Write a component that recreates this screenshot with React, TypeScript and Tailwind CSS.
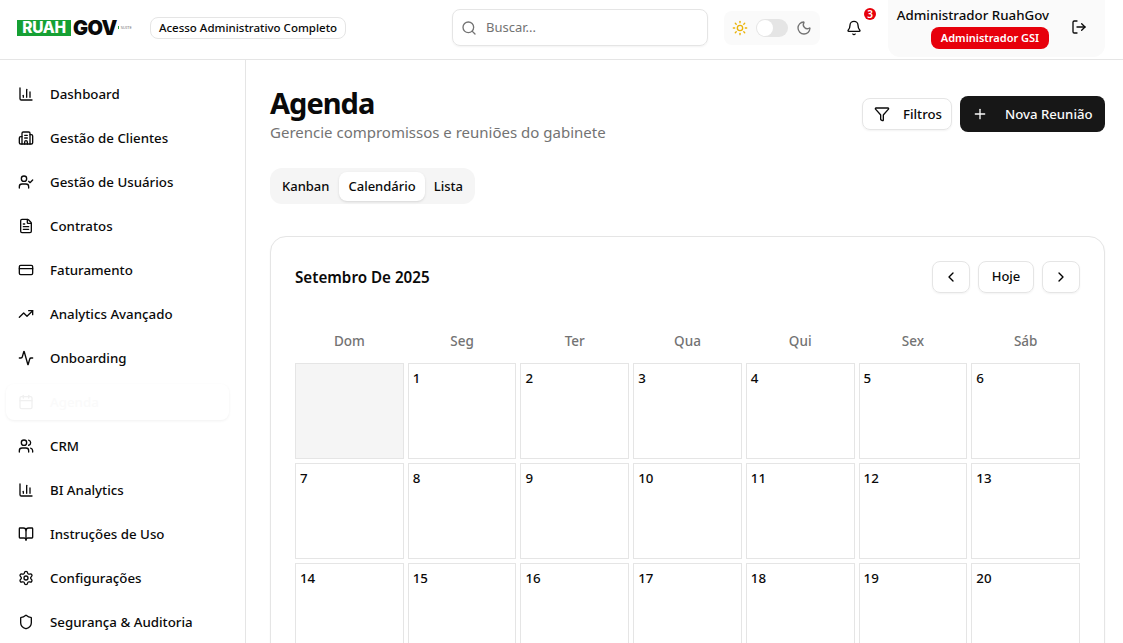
import {
  Activity,
  BookOpen,
  Building2,
  Calendar,
  ChartColumn,
  ChevronLeft,
  ChevronRight,
  CreditCard,
  FileText,
  Filter,
  Bell,
  LogOut,
  Moon,
  Plus,
  Search,
  Settings,
  Shield,
  Sun,
  TrendingUp,
  UserCheck,
  Users,
} from "lucide-react";

const navItems = [
  { name: "Dashboard", icon: ChartColumn },
  { name: "Gestão de Clientes", icon: Building2 },
  { name: "Gestão de Usuários", icon: UserCheck },
  { name: "Contratos", icon: FileText },
  { name: "Faturamento", icon: CreditCard },
  { name: "Analytics Avançado", icon: TrendingUp },
  { name: "Onboarding", icon: Activity },
  { name: "Agenda", icon: Calendar, active: true },
  { name: "CRM", icon: Users },
  { name: "BI Analytics", icon: ChartColumn },
  { name: "Instruções de Uso", icon: BookOpen },
  { name: "Configurações", icon: Settings },
  { name: "Segurança & Auditoria", icon: Shield },
];

const weekDays = ["Dom", "Seg", "Ter", "Qua", "Qui", "Sex", "Sáb"];

const days: (number | null)[] = [null];
for (let d = 1; d <= 20; d++) days.push(d);

function Logo() {
  return (
    <div className="flex items-center w-[133px] shrink-0">
      <div className="flex items-center justify-center w-[54px] h-[16px] bg-[#16a034] text-white text-[15.5px] leading-none font-extrabold font-['Inter',sans-serif] tracking-[-0.3px]">
        RUAH
      </div>
      <span className="ml-[2px] text-[#0a0a0a] text-[20px] leading-none font-black font-['Inter',sans-serif] tracking-[-0.6px]">
        GOV
      </span>
      <span className="ml-[1px] w-[1px] h-[3px] bg-[#16a034]" />
      <span className="ml-[2px] text-[4px] leading-none text-[#737373]">SUITE</span>
    </div>
  );
}

function Header() {
  return (
    <header className="flex items-center h-[60px] shrink-0 border-b border-[#e5e5e5] pl-[17px] pr-[18px] pb-[4px] bg-white">
      <Logo />
      <span className="flex items-center justify-center shrink-0 w-[196px] h-[22px] rounded-lg border border-[#e5e5e5] text-[11.5px] font-medium text-[#0a0a0a] whitespace-nowrap">
        Acesso Administrativo Completo
      </span>
      <div className="flex items-center gap-[9px] shrink-0 w-[256px] h-[37px] ml-[106px] px-2 rounded-lg border border-[#e5e5e5] shadow-xs">
        <Search size={16} className="text-[#737373]" />
        <span className="text-[13px] text-[#737373]">Buscar...</span>
      </div>
      <div className="flex items-center justify-center gap-[8px] shrink-0 w-[96px] h-[34px] ml-4 rounded-lg bg-[#fafafa]">
        <Sun size={16} className="text-[#eab308]" />
        <span className="flex items-center w-[32px] h-[18px] rounded-full bg-[#e5e5e5] p-px">
          <span className="w-4 h-4 rounded-full bg-white" />
        </span>
        <Moon size={16} className="text-[#737373]" />
      </div>
      <div className="relative flex items-center justify-center shrink-0 w-9 h-9 ml-4">
        <Bell size={16} className="text-[#0a0a0a]" />
        <span className="absolute top-[-2px] right-[-4px] flex items-center justify-center w-3 h-3 rounded-full bg-[#e7000b] text-white text-[10px] font-semibold leading-none">
          3
        </span>
      </div>
      <div className="flex items-start gap-[22px] shrink-0 self-start w-[217px] h-[57px] ml-4 pr-[18px] rounded-b-xl bg-[#fafafa]">
        <div className="flex flex-col items-end flex-1 gap-[2px] pt-[5px]">
          <span className="text-[13.3px] leading-[20px] font-medium text-[#0a0a0a] whitespace-nowrap">
            Administrador RuahGov
          </span>
          <span className="flex items-center justify-center w-[118px] h-[22px] rounded-lg bg-[#e7000b] text-white text-[11px] font-semibold whitespace-nowrap">
            Administrador GSI
          </span>
        </div>
        <LogOut size={16} className="mt-[19px] text-[#0a0a0a]" />
      </div>
    </header>
  );
}

function Sidebar() {
  return (
    <aside className="w-[246px] shrink-0 border-r border-[#e5e5e5] bg-white">
      <nav className="flex flex-col gap-2 pt-4 pl-[6px] pr-[16px]">
        {navItems.map(({ name, icon: Icon, active }) => (
          <a
            key={name}
            className={`flex items-center gap-4 h-9 px-3 rounded-lg text-[13.3px] font-medium whitespace-nowrap ${
              active ? "text-[#fafafa] bg-white shadow-[0_1px_3px_rgba(0,0,0,0.06)]" : "text-[#0a0a0a]"
            }`}
          >
            <Icon size={16} strokeWidth={2} className={active ? "text-[#f0f0f0]" : "text-[#0a0a0a]"} />
            <span className="pt-[2px]">{name}</span>
          </a>
        ))}
      </nav>
    </aside>
  );
}

function CalendarCard() {
  return (
    <section className="mt-8 rounded-2xl border border-[#e5e5e5] shadow-xs px-6 pt-6 pb-6 bg-white">
      <div className="flex items-center justify-between h-8">
        <h2 className="text-[15.2px] font-semibold text-[#0a0a0a]">Setembro De 2025</h2>
        <div className="flex items-center gap-2">
          <button className="flex items-center justify-center w-[38px] h-8 rounded-lg border border-[#e5e5e5] shadow-xs">
            <ChevronLeft size={16} />
          </button>
          <button className="flex items-center justify-center w-[56px] h-8 rounded-lg border border-[#e5e5e5] shadow-xs text-[13px] font-medium text-[#0a0a0a]">
            Hoje
          </button>
          <button className="flex items-center justify-center w-[38px] h-8 rounded-lg border border-[#e5e5e5] shadow-xs">
            <ChevronRight size={16} />
          </button>
        </div>
      </div>
      <div className="grid grid-cols-7 gap-1 mt-[38px]">
        {weekDays.map((d) => (
          <div key={d} className="h-[20px] mb-[8px] text-center text-[13.5px] leading-[20px] font-medium text-[#737373]">
            {d}
          </div>
        ))}
        {days.map((d, i) => (
          <div
            key={i}
            className={`h-24 border border-[#e5e5e5] p-1 text-[13.3px] leading-[20px] font-medium text-[#0a0a0a] ${
              d === null ? "bg-[#f5f5f5]" : "bg-white"
            }`}
          >
            {d}
          </div>
        ))}
      </div>
    </section>
  );
}

export default function App() {
  return (
    <div className="flex flex-col h-screen overflow-hidden bg-white font-['Noto_Sans',sans-serif]">
      <Header />
      <div className="flex flex-1 min-h-0">
        <Sidebar />
        <main className="flex-1 min-w-0 pt-[25px] pl-6 pr-[18px]">
          <div className="flex items-start justify-between">
            <div>
              <h1 className="text-[29px] leading-9 font-bold tracking-[-1px] text-[#0a0a0a]">Agenda</h1>
              <p className="-mt-[1px] text-[15px] leading-6 text-[#737373]">Gerencie compromissos e reuniões do gabinete</p>
            </div>
            <div className="flex items-center gap-2 mt-[11px]">
              <button className="flex items-center gap-[13px] w-[90px] h-8 pl-[11px] rounded-lg border border-[#e5e5e5] shadow-xs text-[13.2px] font-medium text-[#0a0a0a]">
                <Filter size={16} />
                <span className="pt-[2px]">Filtros</span>
              </button>
              <button className="flex items-center gap-[17px] w-[145px] h-9 pl-[12px] rounded-lg bg-[#171717] text-[13.2px] font-medium text-[#fafafa]">
                <Plus size={16} />
                <span className="pt-[2px]">Nova Reunião</span>
              </button>
            </div>
          </div>
          <div className="flex items-center gap-[1px] w-[205px] h-9 mt-6 px-[3px] rounded-xl bg-[#f5f5f5] text-[13px] font-medium text-[#0a0a0a]">
            <span className="h-[29px] leading-[29px] px-[9px]">Kanban</span>
            <span className="h-[29px] leading-[29px] px-[9px] rounded-lg bg-white shadow-sm">Calendário</span>
            <span className="h-[29px] leading-[29px] pl-[8px]">Lista</span>
          </div>
          <CalendarCard />
        </main>
      </div>
    </div>
  );
}
